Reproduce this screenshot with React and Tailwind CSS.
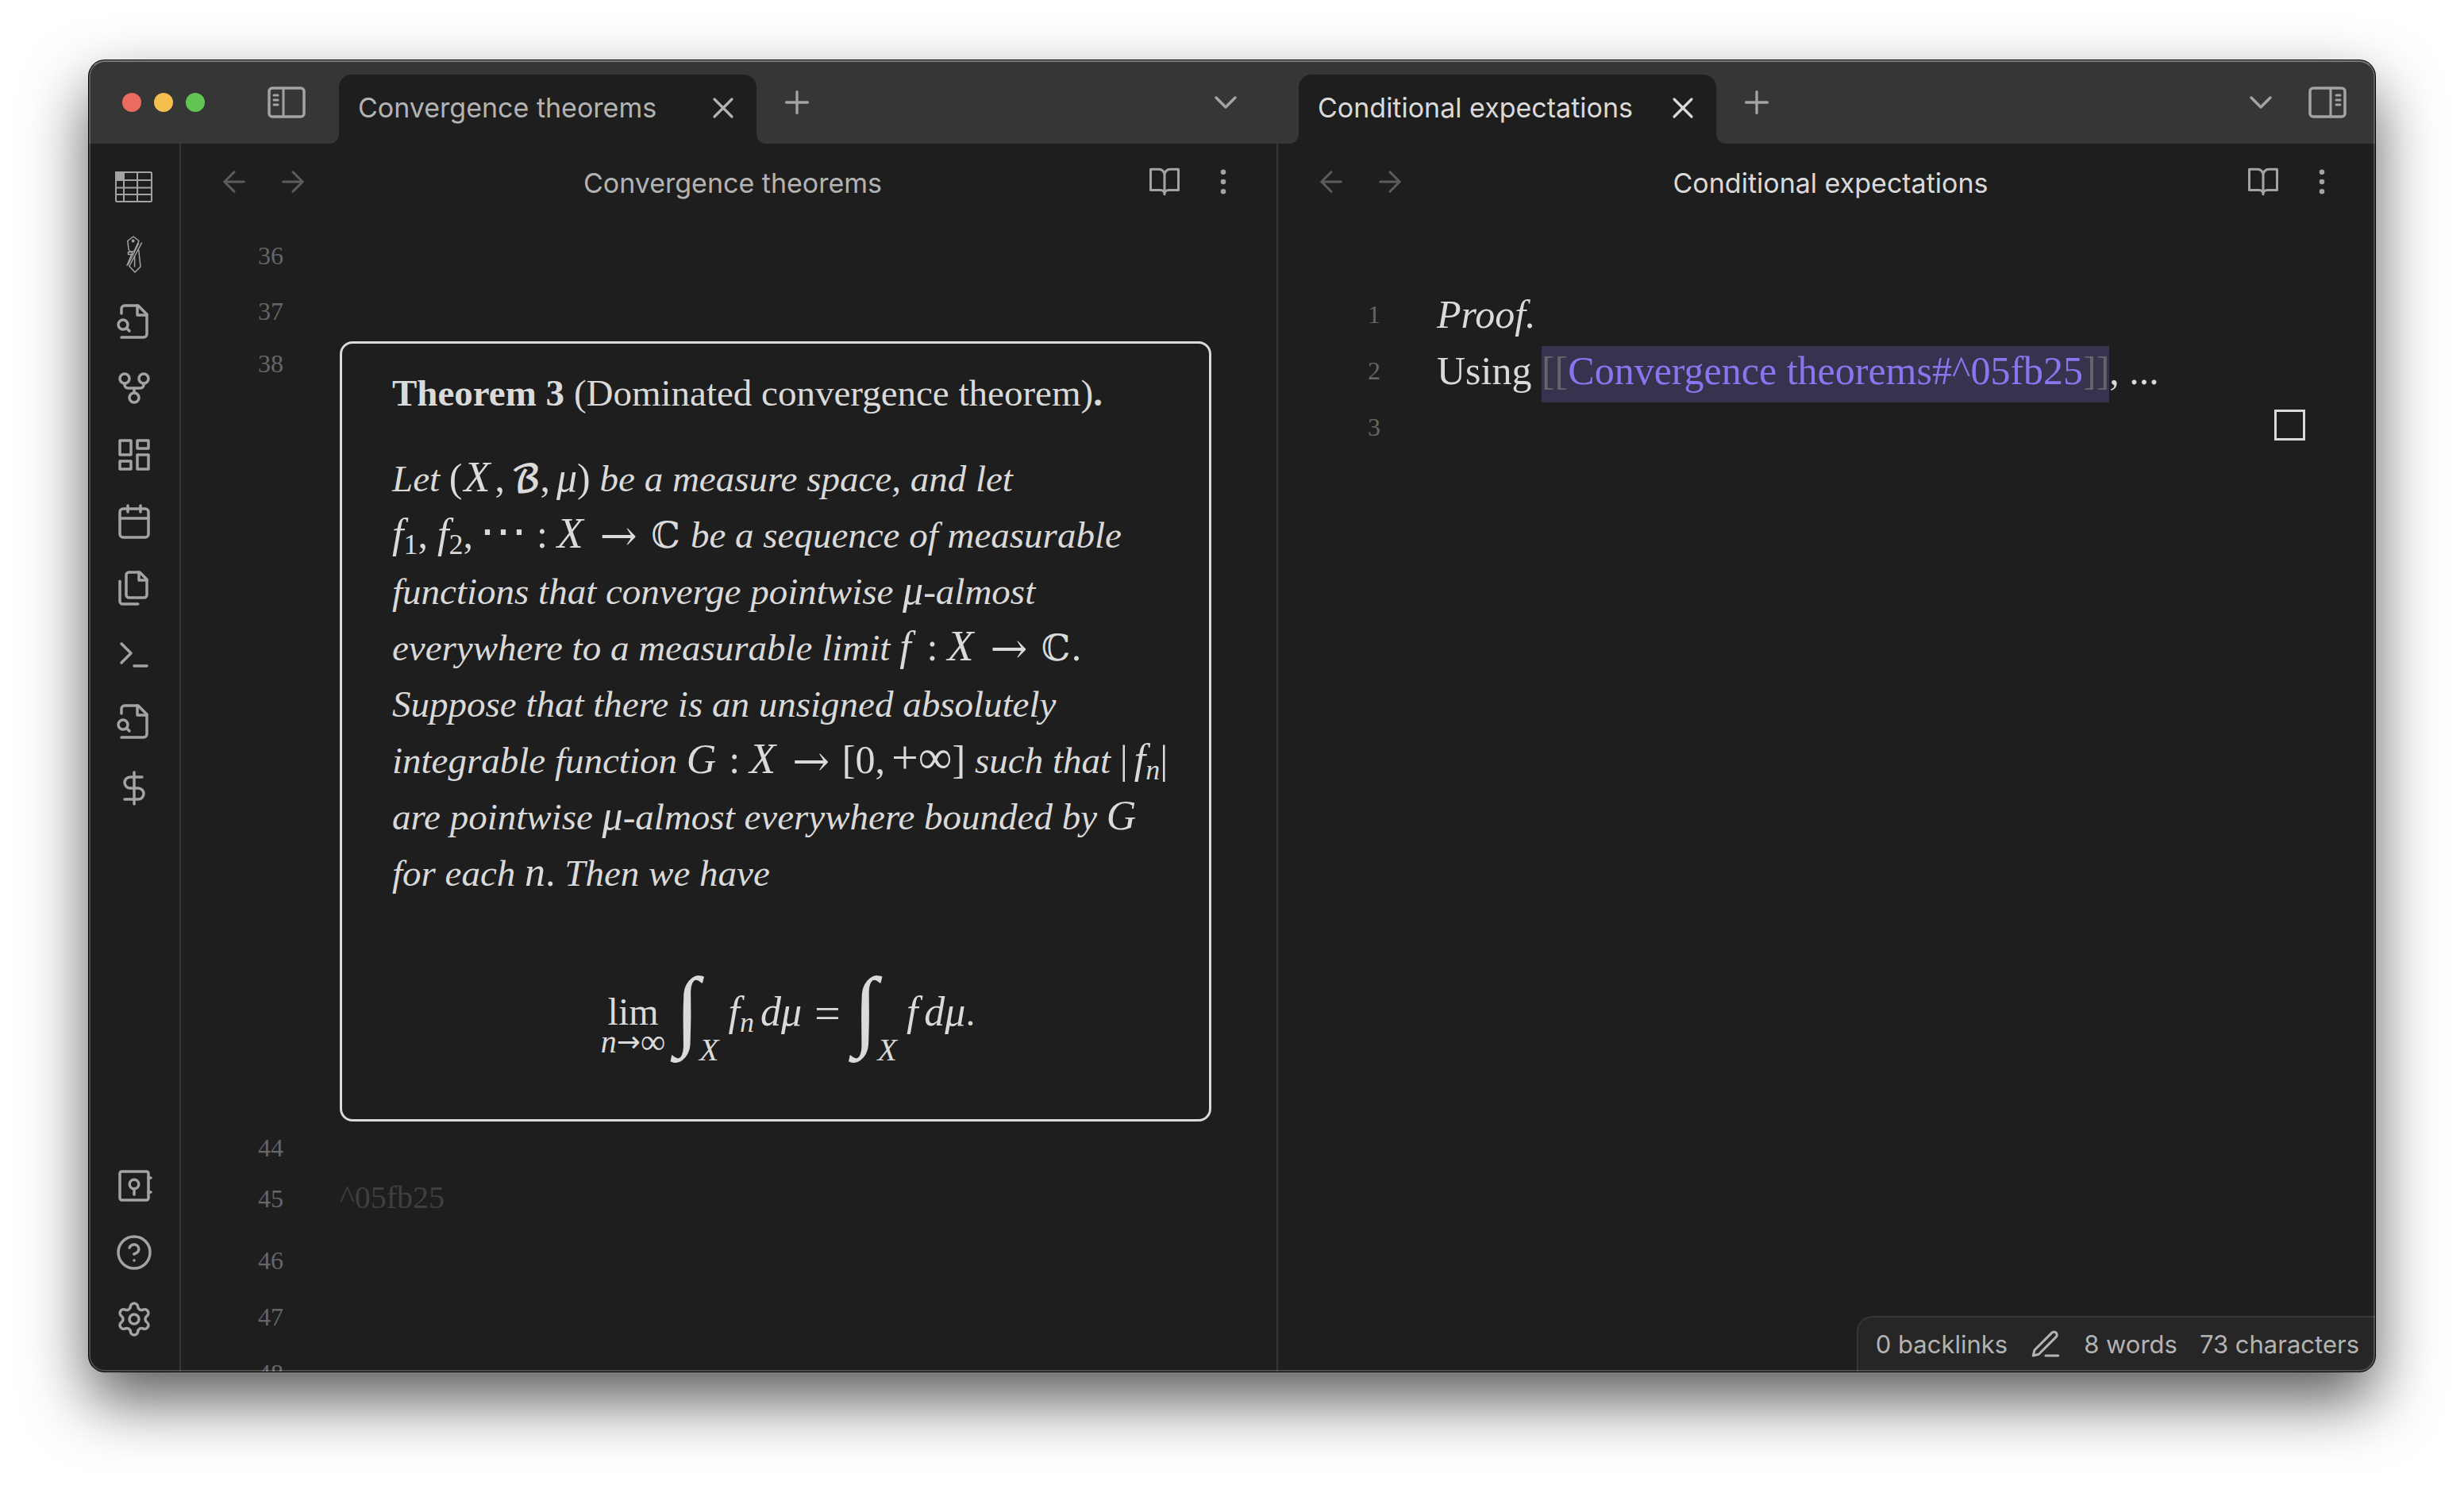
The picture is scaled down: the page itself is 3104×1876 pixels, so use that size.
import React from "react";
import { Settings } from "lucide-react";

function Icon({ size = "size-12", children }) {
  return (
    <svg
      viewBox="0 0 24 24"
      className={`${size} shrink-0`}
      fill="none"
      stroke="currentColor"
      strokeWidth="1.75"
      strokeLinecap="round"
      strokeLinejoin="round"
      aria-hidden="true"
    >
      {children}
    </svg>
  );
}

const TableIcon = () => (
  <svg viewBox="0 0 48 42" className="h-[42px] w-12" fill="none" stroke="currentColor" strokeWidth="2" aria-hidden="true">
    <rect x="1" y="1" width="45" height="37" rx="1.5" />
    <path d="M1 1h10v10H1z" fill="currentColor" />
    <path d="M11 1v37M28 1v37M1 11h45M1 20.5h45M1 29h45" />
  </svg>
);

const KnifeIcon = () => (
  <svg viewBox="0 0 20 48" className="h-12 w-5" fill="none" stroke="currentColor" strokeWidth="1.5" strokeLinejoin="round" strokeLinecap="round" aria-hidden="true">
    <path d="M9 1 1.800 6.500 3 17l2 3.500 5-1L16 6.500z" />
    <circle cx="8.700" cy="6.500" r="1.200" fill="currentColor" />
    <path d="M2.500 20.500h5v3h-5zM6.500 24 1 37.500" />
    <path d="M19.500 9 4 38M15.500 10 2.500 36" />
    <path d="M4 38.500 11 46l7-7-2.300-21M10.600 26v13" />
  </svg>
);

const FileSearchIcon = () => (
  <Icon>
    <path d="M4 22h14a2 2 0 0 0 2-2V7.500L14.500 2H6a2 2 0 0 0-2 2v3" />
    <path d="M14 2v6h6" />
    <circle cx="5" cy="14" r="3" />
    <path d="m9 18-1.500-1.500" />
  </Icon>
);

const topTools = [
  ["New table", <TableIcon />],
  ["Templates", <KnifeIcon />],
  ["Search in file", <FileSearchIcon />],
  [
    "Open graph view",
    <Icon>
      <circle cx="12" cy="18" r="3" />
      <circle cx="6" cy="6" r="3" />
      <circle cx="18" cy="6" r="3" />
      <path d="M18 9v1a2 2 0 0 1-2 2H8a2 2 0 0 1-2-2V9M12 12v3" />
    </Icon>,
  ],
  [
    "Create new canvas",
    <Icon>
      <path d="M3 3h7v9H3zM14 3h7v5h-7zM14 12h7v9h-7zM3 16h7v5H3z" />
    </Icon>,
  ],
  [
    "Open daily note",
    <Icon>
      <rect x="3" y="4" width="18" height="18" rx="2" />
      <path d="M16 2v4M8 2v4M3 10h18" />
    </Icon>,
  ],
  [
    "Insert template",
    <Icon>
      <path d="M15.500 2H8.600c-.4 0-.8.2-1.100.5-.3.3-.5.7-.5 1.100v12.800c0 .4.2.8.5 1.100.3.3.7.5 1.100.5h9.800c.4 0 .8-.2 1.100-.5.3-.3.5-.7.5-1.100V6.500L15.500 2z" />
      <path d="M3 7.600v12.800c0 .4.2.8.5 1.100.3.3.7.5 1.100.5h9.800M15 2v5h5" />
    </Icon>,
  ],
  [
    "Open command palette",
    <Icon>
      <path d="m4 17 6-6-6-6M12 19h8" />
    </Icon>,
  ],
  ["Search references", <FileSearchIcon />],
  [
    "Insert math",
    <Icon>
      <path d="M12 2v20M17 5H9.500a3.500 3.500 0 0 0 0 7h5a3.500 3.500 0 0 1 0 7H6" />
    </Icon>,
  ],
];

const bottomTools = [
  [
    "Open another vault",
    <Icon>
      <rect x="3" y="3" width="18" height="18" rx="1.200" />
      <circle cx="12" cy="11" r="2.900" />
      <path d="M12 14v3.500M21 7h1.500M21 16h1.500" />
    </Icon>,
  ],
  [
    "Help",
    <Icon>
      <circle cx="12" cy="12" r="10" />
      <path d="M9.090 9a3 3 0 0 1 5.830 1c0 2-3 3-3 3M12 17h.01" />
    </Icon>,
  ],
  ["Settings", <Settings className="size-12" strokeWidth={1.75} />],
];

function Ribbon() {
  const tool = ([label, icon], i) => (
    <button key={i} type="button" aria-label={label} className="flex h-[84px] items-center justify-center">
      {icon}
    </button>
  );
  return (
    <nav className="flex w-[116px] shrink-0 flex-col justify-between border-r-2 border-[#363636] pt-[14px] pb-6 text-[#a3a3a3]">
      <div className="flex flex-col">{topTools.map(tool)}</div>
      <div className="flex flex-col">{bottomTools.map(tool)}</div>
    </nav>
  );
}

function SidebarIcon({ right }) {
  return (
    <svg viewBox="0 0 48 40" className="h-10 w-12" fill="none" stroke="currentColor" strokeLinecap="round" aria-hidden="true">
      <rect x="2" y="2" width="44" height="36" rx="4" strokeWidth="3.500" />
      {right ? (
        <path d="M28 3v34M35 11h5M35 17h5M35 23h5" strokeWidth="3" />
      ) : (
        <path d="M20 3v34M8 11h5M8 17h5M8 23h5" strokeWidth="3" />
      )}
    </svg>
  );
}

function TabFoot({ right }) {
  return (
    <svg
      viewBox="0 0 12 12"
      className={right ? "absolute bottom-0 left-full size-3" : "absolute right-full bottom-0 size-3"}
      aria-hidden="true"
    >
      <path d={right ? "M0 0a12 12 0 0 0 12 12H0z" : "M12 0A12 12 0 0 1 0 12h12z"} fill="#1e1e1e" />
    </svg>
  );
}

function TabStrip({ title, active }) {
  return (
    <>
      <div
        className={`relative flex h-[87px] w-[526px] shrink-0 items-center justify-between self-end rounded-t-2xl bg-[#1e1e1e] pr-5 pb-1 pl-6 ${
          active ? "text-[#dadada]" : "text-[#b3b3b3]"
        }`}
      >
        <TabFoot />
        <TabFoot right />
        <span className="text-[34px] leading-[44px] whitespace-nowrap">{title}</span>
        <button type="button" aria-label={`Close ${title}`}>
          <Icon size="size-11">
            <path d="M18 6 6 18M6 6l12 12" />
          </Icon>
        </button>
      </div>
      <button type="button" aria-label="New tab" className="ml-7 text-[#a3a3a3]">
        <Icon size="size-[46px]">
          <path d="M5 12h14M12 5v14" />
        </Icon>
      </button>
      <button type="button" aria-label="Tab list" className="ml-auto text-[#a3a3a3]">
        <Icon>
          <path d="m6 9 6 6 6-6" />
        </Icon>
      </button>
    </>
  );
}

function TitleBar() {
  return (
    <header className="flex h-[105px] shrink-0 items-center bg-[#363636]">
      <div className="flex h-full flex-1 items-center pr-[42px]">
        <div className="flex w-[315px] shrink-0 items-center pl-[42px]">
          <div className="flex gap-4">
            <button type="button" aria-label="Close window" className="size-6 rounded-full bg-[#ec6a5e]" />
            <button type="button" aria-label="Minimize window" className="size-6 rounded-full bg-[#f4bf4f]" />
            <button type="button" aria-label="Zoom window" className="size-6 rounded-full bg-[#61c554]" />
          </div>
          <button type="button" aria-label="Toggle left sidebar" className="mr-[42px] ml-auto text-[#a3a3a3]">
            <SidebarIcon />
          </button>
        </div>
        <TabStrip title="Convergence theorems" />
      </div>
      <div className="flex h-full w-[calc((100%-116px)/2)] shrink-0 items-center pr-9 pl-[26px]">
        <TabStrip title="Conditional expectations" active />
        <button type="button" aria-label="Toggle right sidebar" className="ml-9 text-[#a3a3a3]">
          <SidebarIcon right />
        </button>
      </div>
    </header>
  );
}

function ViewHeader({ title, active }) {
  const btn = "flex h-[74px] w-[74px] items-center justify-center";
  return (
    <div className="flex h-24 shrink-0 items-center px-[30px]">
      <div className="mr-[10px] flex text-[#5c5c5c]">
        <button type="button" aria-label="Navigate back" className={btn}>
          <Icon size="size-[42px]">
            <path d="m12 19-7-7 7-7M19 12H5" />
          </Icon>
        </button>
        <button type="button" aria-label="Navigate forward" className={btn}>
          <Icon size="size-[42px]">
            <path d="M5 12h14M12 5l7 7-7 7" />
          </Icon>
        </button>
      </div>
      <h2
        className={`flex-1 pt-1 text-center text-[34px] leading-[44px] whitespace-nowrap ${
          active ? "text-[#dadada]" : "text-[#b3b3b3]"
        }`}
      >
        {title}
      </h2>
      <div className="flex text-[#a3a3a3]">
        <button type="button" aria-label="Reading view" className={btn}>
          <Icon size="size-[42px]">
            <path d="M2 3h6a4 4 0 0 1 4 4v14a3 3 0 0 0-3-3H2zM22 3h-6a4 4 0 0 0-4 4v14a3 3 0 0 1 3-3h7z" />
          </Icon>
        </button>
        <button type="button" aria-label="More options" className={btn}>
          <Icon size="size-[42px]">
            <g fill="currentColor">
              <circle cx="12" cy="12" r="1" />
              <circle cx="12" cy="5" r="1" />
              <circle cx="12" cy="19" r="1" />
            </g>
          </Icon>
        </button>
      </div>
    </div>
  );
}

function Row({ n, height = "h-[71px]", children }) {
  return (
    <div className={`flex shrink-0 ${height}`}>
      <span className="w-[129px] shrink-0 text-right text-[32px] leading-[71px] text-[#666666]">{n}</span>
      <div className="ml-[71px] min-w-0 flex-1">{children}</div>
    </div>
  );
}

const V = ({ children }) => <i className="text-[52px] leading-none">{children}</i>;
const X = () => <i className="mr-1.5 text-[54px] leading-none">X</i>;
const Up = ({ children, className = "" }) => <span className={`text-[50px] leading-none not-italic ${className}`}>{children}</span>;
const Sub = ({ children, className = "" }) => (
  <span className={`relative top-2 text-[36px] leading-none ${className}`}>{children}</span>
);
const Arrow = () => <span className="mx-3.5 font-['DejaVu_Math_TeX_Gyre','DejaVu_Sans'] text-[50px] leading-none not-italic">→</span>;
const SetC = () => <span className="font-['DejaVu_Math_TeX_Gyre','DejaVu_Sans'] text-[46px] leading-none not-italic">ℂ</span>;

function Integral() {
  return (
    <span className="flex items-end">
      <span className="mb-2.5 text-[112px] leading-[112px]">∫</span>
      <i className="text-[40px] leading-[28px]">X</i>
    </span>
  );
}

function Theorem() {
  return (
    <section className="mr-[82px] flex h-[983px] flex-col rounded-2xl border-[3px] border-[#dadada] pt-[27px] pr-8 pl-[63px] text-[47px] leading-[71px] text-[#dadada]">
      <h3 className="whitespace-nowrap">
        <b>Theorem 3</b> (Dominated convergence theorem)<b>.</b>
      </h3>
      <p className="mt-[37px] whitespace-nowrap italic">
        <span className="block h-[71px]">
          Let <Up className="mr-0.5">(</Up><X /><Up className="mr-2">,</Up>
          <span className="font-['DejaVu_Math_TeX_Gyre','DejaVu_Sans'] text-[46px] leading-none font-bold not-italic">ℬ</span>
          <Up className="mr-2">,</Up><V>μ</V><Up>)</Up> be a measure space, and let
        </span>
        <span className="block h-[71px]">
          <V>f</V><Sub className="not-italic">1</Sub><Up className="mr-3">,</Up><V>f</V><Sub className="not-italic">2</Sub>
          <Up className="mr-2">,</Up><span className="text-[60px] leading-none not-italic">⋯</span><Up className="mx-3">:</Up><X /><Arrow /><SetC /> be a sequence of measurable
        </span>
        <span className="block h-[71px]">functions that converge pointwise <V>μ</V>-almost</span>
        <span className="block h-[71px]">
          everywhere to a measurable limit <V>f</V><Up className="mr-3 ml-5">:</Up><X /><Arrow /><SetC /><Up>.</Up>
        </span>
        <span className="block h-[71px]">Suppose that there is an unsigned absolutely</span>
        <span className="block h-[71px]">
          integrable function <V>G</V><Up className="mr-3 ml-4">:</Up><X /><Arrow /><Up>[0,</Up>
          <span className="ml-2 text-[60px] leading-none not-italic">+∞</span><Up>]</Up> such that{" "}
          <Up className="mr-2">|</Up><V>f</V><Sub>n</Sub><Up>|</Up>
        </span>
        <span className="block h-[71px]">
          are pointwise <V>μ</V>-almost everywhere bounded by <V>G</V>
        </span>
        <span className="block h-[71px]">
          for each <V>n</V><Up>.</Up> Then we have
        </span>
      </p>
      <div className="mt-[84px] flex h-[112px] items-center justify-center whitespace-nowrap">
        <span className="mt-7 flex flex-col items-center">
          <span className="text-[48px] leading-[46px]">lim</span>
          <span className="flex items-center text-[40px] leading-[30px]">
            <i>n</i>
            <span className="font-['DejaVu_Sans'] text-[36px]">→</span>
            <span className="text-[44px]">∞</span>
          </span>
        </span>
        <span className="ml-3">
          <Integral />
        </span>
        <span className="ml-3">
          <V>f</V><Sub className="italic">n</Sub>
        </span>
        <span className="ml-2"><V>dμ</V></span>
        <span className="mx-4 text-[58px]">=</span>
        <Integral />
        <span className="ml-3"><V>f</V></span>
        <span className="ml-2"><V>dμ</V>.</span>
      </div>
    </section>
  );
}

export default function App() {
  return (
    <main className="flex h-screen flex-col bg-white px-28 pt-[76px] pb-[148px] font-['Inter',sans-serif]">
      <div className="relative flex min-h-0 flex-1 flex-col overflow-hidden rounded-[20px] bg-[#1e1e1e] shadow-[0_0_0_1px_#000,0_36px_80px_rgba(0,0,0,0.65)]">
        <TitleBar />
        <div className="flex min-h-0 flex-1">
          <Ribbon />
          <section className="flex min-w-0 flex-1 flex-col overflow-hidden border-r-2 border-[#363636]">
            <ViewHeader title="Convergence theorems" />
            <div className="flex min-h-0 flex-1 flex-col overflow-hidden pt-[10px] font-['Liberation_Serif',serif]">
              <Row n="36" height="h-[70px]" />
              <Row n="37" height="h-[66px]" />
              <Row n="38" height="h-[988px]">
                <div className="pt-[7px]">
                  <Theorem />
                </div>
              </Row>
              <Row n="44" height="h-[64px]" />
              <Row n="45" height="h-[78px]">
                <p className="text-[40px] leading-[68px] text-[#3f3f3f]">^05fb25</p>
              </Row>
              <Row n="46" />
              <Row n="47" />
              <Row n="48" />
            </div>
          </section>
          <section className="flex w-[calc((100%-116px)/2)] shrink-0 flex-col">
            <ViewHeader title="Conditional expectations" active />
            <div className="flex flex-1 flex-col pt-[84px] font-['Liberation_Serif',serif]">
              <Row n="1">
                <p className="text-[50px] leading-[71px] text-[#dadada] italic">Proof.</p>
              </Row>
              <Row n="2">
                <p className="text-[50px] leading-[71px] whitespace-nowrap text-[#dadada]">
                  Using{" "}
                  <span className="inline-block h-[71px] bg-[#38324f] leading-[63px] text-[#666666]">
                    [[<a href="#05fb25" className="text-[#8a75ee]">Convergence theorems#^05fb25</a>]]
                  </span>
                  , ...
                </p>
              </Row>
              <Row n="3">
                <div className="mt-[13px] mr-[88px] ml-auto size-[39px] border-[3px] border-[#dadada]" />
              </Row>
            </div>
          </section>
        </div>
        <footer className="absolute right-0 bottom-0 flex h-[70px] items-center rounded-tl-[20px] border-t-2 border-l-2 border-[#363636] bg-[#262626] pr-5 pl-[22px] text-[31px] text-[#b3b3b3]">
          <span>0 backlinks</span>
          <button type="button" aria-label="Editing mode" className="mx-[27px]">
            <Icon size="size-[42px]">
              <path d="M12 20h9M16.500 3.500a2.120 2.120 0 0 1 3 3L7 19l-4 1 1-4L16.500 3.500z" />
            </Icon>
          </button>
          <span>8 words</span>
          <span className="ml-7">73 characters</span>
        </footer>
        <div className="pointer-events-none absolute inset-0 rounded-[20px] border-2 border-white/20 border-t-white/35" />
      </div>
    </main>
  );
}
